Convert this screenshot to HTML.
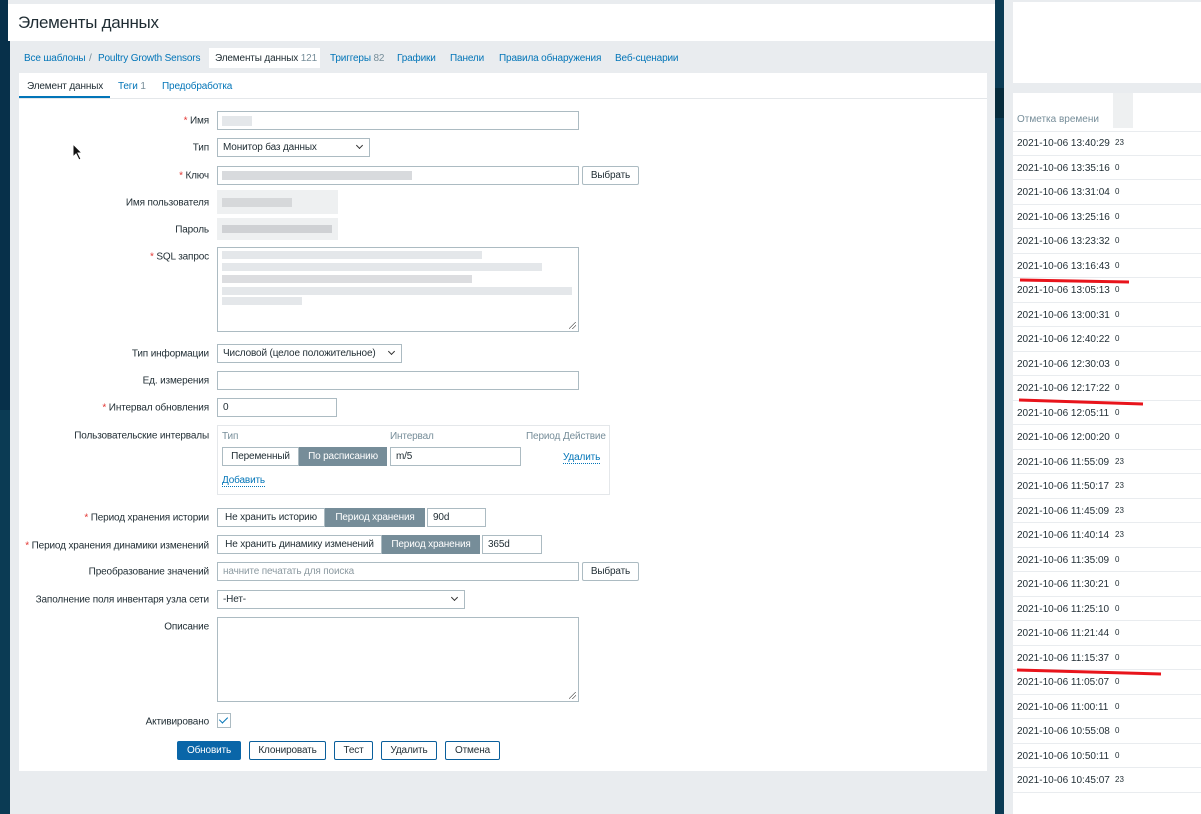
<!DOCTYPE html>
<html><head><meta charset="utf-8"><style>
*{box-sizing:border-box;margin:0;padding:0}
body{width:1201px;height:814px;position:relative;overflow:hidden;background:#e9ecef;font-family:"Liberation Sans",Arial,sans-serif;font-size:10px;letter-spacing:-0.15px;color:#1f2c33}
.a{position:absolute;white-space:nowrap}
.lbl{position:absolute;right:992px;white-space:nowrap;transform:translateY(-50%)}
.req:before{content:"* ";color:#e33734}
.in{position:absolute;border:1px solid #acbbc2;background:#fff;padding:0 5px;line-height:17px;white-space:nowrap;overflow:hidden}
.btn{position:absolute;border:1px solid #0a5f9c;background:#fff;color:#1f2c33;text-align:center;line-height:17px;border-radius:2px}
.bl{position:absolute;background:#e4e7ea}
.sel:after{content:"";position:absolute;right:7px;top:4px;width:4px;height:4px;border-right:1.2px solid #333;border-bottom:1.2px solid #333;transform:rotate(45deg)}
.seg{position:absolute;border:1px solid #acbbc2;line-height:17px;text-align:center;background:#fff;white-space:nowrap;overflow:hidden}
.seg.on{background:#768d99;color:#fff;border-color:#768d99}
.link{color:#0275b8}
.dl{border-bottom:1px dotted #0275b8}
.rs{position:absolute;right:2px;bottom:2px;width:7px;height:7px;background:linear-gradient(135deg,transparent 45%,#666 45%,#666 52%,transparent 52%,transparent 70%,#666 70%,#666 77%,transparent 77%)}
.row{position:absolute;left:1013px;width:188px;height:24.5px;border-bottom:1px solid #e9ecef;font-size:10px;letter-spacing:0}
.row span{position:absolute;left:4px;top:7px}
.row b{position:absolute;left:102px;top:7px;font-weight:normal;font-size:8px}
</style></head><body>
<div class="a" style="left:0;top:0;width:10px;height:814px;background:#0b3b54"></div>
<div class="a" style="left:0;top:0;width:10px;height:410px;background:#07304a"></div>
<div class="a" style="left:8px;top:0;width:987px;height:41px;background:#fff"></div>
<div class="a" style="left:8px;top:0;width:987px;height:4px;background:#e9ecef"></div>
<div class="a" style="left:18px;top:13px;font-size:17px;letter-spacing:-0.3px;color:#1f2c33">Элементы данных</div>
<div class="a link" style="left:24px;top:53px">Все шаблоны</div>
<div class="a" style="left:89px;top:53px;color:#768d99">/</div>
<div class="a link" style="left:98px;top:53px">Poultry Growth Sensors</div>
<div class="a" style="left:209px;top:48px;width:111px;height:20px;background:#fff"></div>
<div class="a" style="left:215px;top:53px">Элементы данных <span style="color:#768d99">121</span></div>
<div class="a link" style="left:330px;top:53px">Триггеры <span style="color:#768d99">82</span></div>
<div class="a link" style="left:397px;top:53px">Графики</div>
<div class="a link" style="left:450px;top:53px">Панели</div>
<div class="a link" style="left:499px;top:53px">Правила обнаружения</div>
<div class="a link" style="left:615px;top:53px">Веб-сценарии</div>
<div class="a" style="left:19px;top:73px;width:968px;height:698px;background:#fff"></div>
<div class="a" style="left:19px;top:98px;width:968px;height:1px;background:#e4e7ea"></div>
<div class="a" style="left:19px;top:96px;width:91px;height:2px;background:#0275b8"></div>
<div class="a" style="left:27px;top:81px">Элемент данных</div>
<div class="a link" style="left:118px;top:81px">Теги <span style="color:#768d99">1</span></div>
<div class="a link" style="left:162px;top:81px">Предобработка</div>
<svg class="a" style="left:72px;top:143px" width="12" height="18"><path d="M1 1 L1 14 L4 11 L7 17 L9 16 L6 10 L10 10 Z" fill="#111" stroke="#fff" stroke-width="1"/></svg>

<div class="lbl req" style="top:121px">Имя</div>
<div class="lbl" style="top:148px">Тип</div>
<div class="lbl req" style="top:176px">Ключ</div>
<div class="lbl" style="top:203px">Имя пользователя</div>
<div class="lbl" style="top:230px">Пароль</div>
<div class="lbl req" style="top:257px">SQL запрос</div>
<div class="lbl" style="top:354px">Тип информации</div>
<div class="lbl" style="top:381px">Ед. измерения</div>
<div class="lbl req" style="top:408px">Интервал обновления</div>
<div class="lbl" style="top:436px">Пользовательские интервалы</div>
<div class="lbl req" style="top:518px">Период хранения истории</div>
<div class="lbl req" style="top:546px">Период хранения динамики изменений</div>
<div class="lbl" style="top:572px">Преобразование значений</div>
<div class="lbl" style="top:600px">Заполнение поля инвентаря узла сети</div>
<div class="lbl" style="top:627px">Описание</div>
<div class="lbl" style="top:722px">Активировано</div>

<div class="in" style="left:217px;top:111px;width:362px;height:19px"></div>
<div class="bl" style="left:222px;top:116px;width:30px;height:10px"></div>
<div class="in sel" style="left:217px;top:138px;width:153px;height:19px">Монитор баз данных</div>
<div class="in" style="left:217px;top:166px;width:362px;height:19px"></div>
<div class="bl" style="left:222px;top:171px;width:190px;height:9px;background:#d8dadd"></div>
<div class="btn" style="left:582px;top:166px;width:57px;height:19px;border-color:#acbbc2">Выбрать</div>
<div class="bl" style="left:217px;top:190px;width:121px;height:24px;background:#eef0f1"></div>
<div class="bl" style="left:222px;top:198px;width:70px;height:9px;background:#d6d8da"></div>
<div class="bl" style="left:217px;top:218px;width:121px;height:22px;background:#eef0f1"></div>
<div class="bl" style="left:222px;top:225px;width:110px;height:8px;background:#cfd1d4"></div>
<div class="in" style="left:217px;top:247px;width:362px;height:85px"><div class="rs"></div></div>
<div class="bl" style="left:222px;top:251px;width:260px;height:8px"></div>
<div class="bl" style="left:222px;top:263px;width:320px;height:8px"></div>
<div class="bl" style="left:222px;top:275px;width:250px;height:8px;background:#dcdde0"></div>
<div class="bl" style="left:222px;top:287px;width:350px;height:8px"></div>
<div class="bl" style="left:222px;top:297px;width:80px;height:8px"></div>
<div class="in sel" style="left:217px;top:344px;width:185px;height:19px">Числовой (целое положительное)</div>
<div class="in" style="left:217px;top:371px;width:362px;height:19px"></div>
<div class="in" style="left:217px;top:398px;width:120px;height:19px">0</div>

<div class="a" style="left:217px;top:425px;width:393px;height:70px;border:1px solid #e4e7ea"></div>
<div class="a" style="left:222px;top:431px;color:#768d99">Тип</div>
<div class="a" style="left:390px;top:431px;color:#768d99">Интервал</div>
<div class="a" style="left:526px;top:431px;color:#768d99">Период</div>
<div class="a" style="left:563px;top:431px;color:#768d99">Действие</div>
<div class="seg" style="left:222px;top:447px;width:77px;height:19px">Переменный</div>
<div class="seg on" style="left:299px;top:447px;width:88px;height:19px">По расписанию</div>
<div class="in" style="left:390px;top:447px;width:131px;height:19px">m/5</div>
<div class="a link dl" style="left:563px;top:452px">Удалить</div>
<div class="a link dl" style="left:222px;top:475px">Добавить</div>

<div class="seg" style="left:217px;top:508px;width:108px;height:19px">Не хранить историю</div>
<div class="seg on" style="left:325px;top:508px;width:100px;height:19px">Период хранения</div>
<div class="in" style="left:427px;top:508px;width:59px;height:19px">90d</div>
<div class="seg" style="left:217px;top:535px;width:165px;height:19px">Не хранить динамику изменений</div>
<div class="seg on" style="left:382px;top:535px;width:98px;height:19px">Период хранения</div>
<div class="in" style="left:482px;top:535px;width:60px;height:19px">365d</div>
<div class="in" style="left:217px;top:562px;width:362px;height:19px;color:#8c9aa1">начните печатать для поиска</div>
<div class="btn" style="left:582px;top:562px;width:57px;height:19px;border-color:#acbbc2">Выбрать</div>
<div class="in sel" style="left:217px;top:590px;width:248px;height:19px">-Нет-</div>
<div class="in" style="left:217px;top:617px;width:362px;height:85px"><div class="rs"></div></div>
<div class="a" style="left:217px;top:713px;width:14px;height:15px;border:1px solid #acbbc2"></div>
<div class="a" style="left:221px;top:715px;width:5px;height:8px;border-right:1.3px solid #0275b8;border-bottom:1.3px solid #0275b8;transform:rotate(45deg)"></div>

<div class="btn" style="left:177px;top:741px;width:64px;height:19px;background:#0a66a8;color:#fff;border-color:#0a66a8">Обновить</div>
<div class="btn" style="left:249px;top:741px;width:77px;height:19px">Клонировать</div>
<div class="btn" style="left:334px;top:741px;width:39px;height:19px">Тест</div>
<div class="btn" style="left:381px;top:741px;width:56px;height:19px">Удалить</div>
<div class="btn" style="left:445px;top:741px;width:55px;height:19px">Отмена</div>

<div class="a" style="left:995px;top:0;width:9px;height:814px;background:#0b3b54"></div>
<div class="a" style="left:995px;top:88px;width:9px;height:30px;background:#062a3b"></div>
<div class="a" style="left:1004px;top:0;width:9px;height:814px;background:#e9ecef"></div>
<div class="a" style="left:1013px;top:2px;width:188px;height:81px;background:#fff"></div>
<div class="a" style="left:1013px;top:93px;width:188px;height:721px;background:#fff"></div>
<div class="a" style="left:1017px;top:114px;color:#768d99;font-size:10px;letter-spacing:0">Отметка времени</div>
<div class="a" style="left:1113px;top:93px;width:20px;height:35px;background:#eef0f1"></div>
<div class="a" style="left:1013px;top:131px;width:188px;height:1px;background:#e9ecef"></div>
<div class="row" style="top:131px"><span>2021-10-06 13:40:29</span><b>23</b></div>
<div class="row" style="top:155.5px"><span>2021-10-06 13:35:16</span><b>0</b></div>
<div class="row" style="top:180px"><span>2021-10-06 13:31:04</span><b>0</b></div>
<div class="row" style="top:204.5px"><span>2021-10-06 13:25:16</span><b>0</b></div>
<div class="row" style="top:229px"><span>2021-10-06 13:23:32</span><b>0</b></div>
<div class="row" style="top:253.5px"><span>2021-10-06 13:16:43</span><b>0</b></div>
<div class="row" style="top:278px"><span>2021-10-06 13:05:13</span><b>0</b></div>
<div class="row" style="top:302.5px"><span>2021-10-06 13:00:31</span><b>0</b></div>
<div class="row" style="top:327px"><span>2021-10-06 12:40:22</span><b>0</b></div>
<div class="row" style="top:351.5px"><span>2021-10-06 12:30:03</span><b>0</b></div>
<div class="row" style="top:376px"><span>2021-10-06 12:17:22</span><b>0</b></div>
<div class="row" style="top:400.5px"><span>2021-10-06 12:05:11</span><b>0</b></div>
<div class="row" style="top:425px"><span>2021-10-06 12:00:20</span><b>0</b></div>
<div class="row" style="top:449.5px"><span>2021-10-06 11:55:09</span><b>23</b></div>
<div class="row" style="top:474px"><span>2021-10-06 11:50:17</span><b>23</b></div>
<div class="row" style="top:498.5px"><span>2021-10-06 11:45:09</span><b>23</b></div>
<div class="row" style="top:523px"><span>2021-10-06 11:40:14</span><b>23</b></div>
<div class="row" style="top:547.5px"><span>2021-10-06 11:35:09</span><b>0</b></div>
<div class="row" style="top:572px"><span>2021-10-06 11:30:21</span><b>0</b></div>
<div class="row" style="top:596.5px"><span>2021-10-06 11:25:10</span><b>0</b></div>
<div class="row" style="top:621px"><span>2021-10-06 11:21:44</span><b>0</b></div>
<div class="row" style="top:645.5px"><span>2021-10-06 11:15:37</span><b>0</b></div>
<div class="row" style="top:670px"><span>2021-10-06 11:05:07</span><b>0</b></div>
<div class="row" style="top:694.5px"><span>2021-10-06 11:00:11</span><b>0</b></div>
<div class="row" style="top:719px"><span>2021-10-06 10:55:08</span><b>0</b></div>
<div class="row" style="top:743.5px"><span>2021-10-06 10:50:11</span><b>0</b></div>
<div class="row" style="top:768px"><span>2021-10-06 10:45:07</span><b>23</b></div>
<svg class="a" style="left:1013px;top:270px" width="188" height="410"><g stroke="#e8141b" stroke-width="3" fill="none"><path d="M7 10 L116 12"/><path d="M6 130 L130 134"/><path d="M4 400 L148 404"/></g></svg>
</body></html>
